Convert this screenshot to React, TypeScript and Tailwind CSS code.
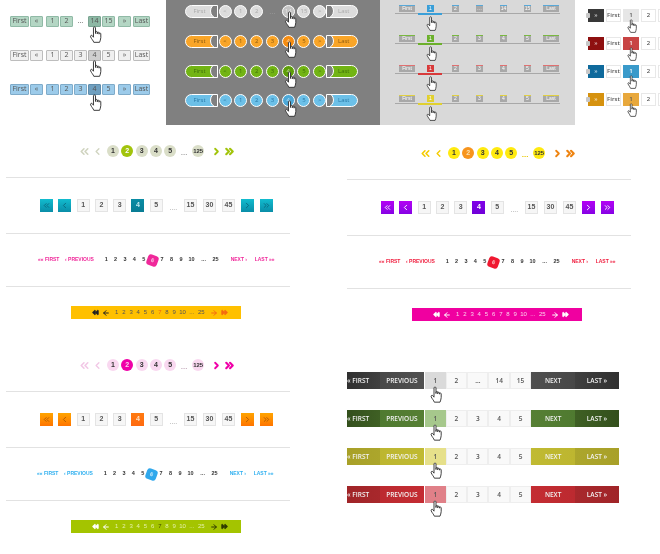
import { ArrowLeft, ArrowRight, ChevronLeft, ChevronRight, ChevronsLeft, ChevronsRight, FastForward, Rewind } from "lucide-react"

function Hand({ className }: { className: string }) {
  return (
    <svg viewBox="0 0 18 25" className={"absolute z-10 " + className} fill="#fff" stroke="#333" strokeWidth="1.4" strokeLinejoin="round">
      <path d="M6 2.5C6 1 9 1 9 2.5V11V9C9 7.6 11.6 7.6 11.6 9V11.5V10C11.6 8.8 14.2 8.8 14.2 10V12V11.2C14.2 10 16.8 10 16.8 11.4V17C16.8 20 15.5 22 15 24H6.5C5.8 21.5 3 19 1.8 16C1.2 14 3 13 4.2 14.2L6 16.5Z" />
    </svg>
  )
}

const flatRows = [
  { btn: "bg-[#b4d6c4] border-[#90baa6]", on: "bg-[#8db8a4] border-[#7aa592]", labels: ["1", "2", "…", "14", "15"], at: 3 },
  { btn: "bg-[#f0f0f0] border-[#bdbdbd]", on: "bg-[#cfcfcf] border-[#b0b0b0]", labels: ["1", "2", "3", "4", "5"], at: 3 },
  { btn: "bg-[#9ccbea] border-[#7fabc9]", on: "bg-[#6f9fbf] border-[#5f8dac]", labels: ["1", "2", "3", "4", "5"], at: 3 },
]

function FlatPanel() {
  return (
    <div className="w-[166px] pl-[10px] pt-4 flex flex-col gap-[23px] font-['Open_Sans',sans-serif] text-[7px] text-[#555]">
      {flatRows.map((r, i) => (
        <div key={i} className="flex h-[11px]">
          <span className={"w-[19px] border rounded-[1px] flex items-center justify-center " + r.btn}>First</span>
          <span className={"w-[13px] ml-px border rounded-[1px] flex items-center justify-center " + r.btn}>«</span>
          <div className="flex gap-px ml-[3px]">
            {r.labels.map((l, j) =>
              l === "…" ? (
                <span key={j} className="w-[13px] flex items-center justify-center">…</span>
              ) : (
                <span key={j} className={"relative w-[13px] border rounded-[1px] flex items-center justify-center " + (j === r.at ? r.on : r.btn)}>
                  {l}
                  {j === r.at && <Hand className="w-[13px] h-[17px] top-[9px] left-0" />}
                </span>
              )
            )}
          </div>
          <span className={"w-[13px] ml-[3px] border rounded-[1px] flex items-center justify-center " + r.btn}>»</span>
          <span className={"w-[17px] ml-[2px] border rounded-[1px] flex items-center justify-center " + r.btn}>Last</span>
        </div>
      ))}
    </div>
  )
}

const pillRows = [
  { c: "bg-[#dcdcdc] text-[#aaa]", on: "bg-[#c4c4c4]", labels: ["1", "2", "", "14", "15"] },
  { c: "bg-[#f9a528] text-[#8a5a10]", on: "bg-[#f58c10]", labels: ["1", "2", "3", "4", "5"] },
  { c: "bg-[#72b414] text-[#3f700a]", on: "bg-[#5e9e08]", labels: ["1", "2", "3", "4", "5"] },
  { c: "bg-[#6cc0e8] text-[#2a7aa8]", on: "bg-[#4ca8d8]", labels: ["1", "2", "3", "4", "5"] },
]

function PillPanel() {
  return (
    <div className="w-[214px] h-[125px] bg-[#808080] pl-[19px] pt-[5px] flex flex-col gap-[16.8px] font-['Open_Sans',sans-serif] text-[6px]">
      {pillRows.map((r, i) => (
        <div key={i} className="flex items-center h-[13px]">
          <span className={"relative overflow-hidden w-[33px] h-[13px] pr-[4px] rounded-l-full border-[1.5px] border-white flex items-center justify-center " + r.c}>
            First
            <span className="absolute -right-[9px] top-[-3px] w-[16px] h-[16px] rounded-full bg-[#808080] border-[1.5px] border-white" />
          </span>
          <div className="flex gap-[2.8px] ml-[0.5px]">
            {["<", ...r.labels, ">"].map((l, j) =>
              l === "" ? (
                <span key={j} className="w-[13px] text-center text-[#999] text-[8px]">…</span>
              ) : (
                <span key={j} className={"relative w-[13px] h-[13px] rounded-full border-[1.5px] border-white flex items-center justify-center " + (j === 4 ? r.on + " text-white/60" : r.c)}>
                  {l}
                  {j === 4 && <Hand className="w-[13px] h-[17px] top-[5px] left-[1px]" />}
                </span>
              )
            )}
          </div>
          <span className={"relative overflow-hidden w-[32px] h-[13px] -ml-[0.5px] pl-[4px] rounded-r-full border-[1.5px] border-white flex items-center justify-center " + r.c}>
            Last
            <span className="absolute -left-[9px] top-[-3px] w-[16px] h-[16px] rounded-full bg-[#808080] border-[1.5px] border-white" />
          </span>
        </div>
      ))}
    </div>
  )
}

const tabRows = [
  { top: "border-[#58a8d8]", on: "bg-[#3a9fd8]", line: "bg-[#3a9fd8]", mid: ["2", "…", "14", "15"] },
  { top: "border-[#7ab840]", on: "bg-[#6cb02c]", line: "bg-[#6cb02c]", mid: ["2", "3", "4", "5"] },
  { top: "border-[#e07070]", on: "bg-[#d83a3a]", line: "bg-[#d83a3a]", mid: ["2", "3", "4", "5"] },
  { top: "border-[#e0d040]", on: "bg-[#e0d030]", line: "bg-[#e0d030]", mid: ["2", "3", "4", "5"] },
]

function TabPanel() {
  return (
    <div className="w-[195px] h-[125px] bg-[#d9d9d9] pl-[15px] pt-[5px] flex flex-col gap-[21px] font-['Liberation_Sans',sans-serif] text-[5px] text-white">
      {tabRows.map((r, i) => (
        <div key={i} className="w-[165px] h-[9px] pl-[4px] flex gap-[11px] border-b border-[#a8a8a8] relative">
          <span className={"w-[16px] h-[7px] bg-[#a8a8a8] border-t flex items-center justify-center " + r.top}>First</span>
          <span className={"relative w-[7px] h-[7px] ml-px mr-[1px] flex items-center justify-center " + r.on}>
            1
            <span className={"absolute top-[8px] -left-[9px] w-[24px] h-[2px] " + r.line} />
            <Hand className="w-[11px] h-[15px] top-[11px] -left-[1px]" />
          </span>
          {r.mid.map((m, j) => (
            <span key={j} className={"w-[7px] h-[7px] ml-[6px] bg-[#a8a8a8] border-t flex items-center justify-center " + r.top}>{m}</span>
          ))}
          <span className={"w-[16px] h-[7px] ml-px bg-[#a8a8a8] border-t flex items-center justify-center " + r.top}>Last</span>
        </div>
      ))}
    </div>
  )
}

const tagRows = [
  { dark: "bg-[#383838]", on: "bg-[#e6e6e6]", onText: "text-[#555]" },
  { dark: "bg-[#8e1010]", on: "bg-[#c84444]", onText: "text-[#fff]" },
  { dark: "bg-[#0f6a9c]", on: "bg-[#3a9aca]", onText: "text-[#fff]" },
  { dark: "bg-[#d6920f]", on: "bg-[#e8a83c]", onText: "text-[#555]" },
]

function TagPanel() {
  return (
    <div className="w-[85px] h-[125px] overflow-hidden pl-[13px] pt-[9px] flex flex-col gap-[15px] font-['Open_Sans',sans-serif] text-[6px] text-[#555] font-semibold">
      {tagRows.map((r, i) => (
        <div key={i} className="flex items-center gap-[2px] h-[13px] w-[90px]">
          <span className={"relative w-[16px] h-[13px] flex items-center justify-center text-white/70 " + r.dark}>
            »
            <span className="absolute -left-[2px] top-[4px] w-[4px] h-[5px] rounded-[1px] bg-[#c8c8c8]" />
          </span>
          <span className="w-[15px] h-[13px] bg-white border border-[#e8e8e8] flex items-center justify-center">First</span>
          <span className={"relative w-[16px] h-[13px] flex items-center justify-center " + r.on + " " + r.onText}>
            1
            <Hand className="w-[10px] h-[14px] top-[10px] left-[4px]" />
          </span>
          <span className="w-[15px] h-[13px] bg-white border border-[#e8e8e8] flex items-center justify-center">2</span>
          <span className="w-[15px] h-[13px] bg-white border border-[#e8e8e8]" />
        </div>
      ))}
    </div>
  )
}

type Theme = {
  dim: string
  ball: string
  ballOn: string
  dots: string
  next: string
  square: string
  squareOn: string
  link: string
  blob: string
  blobText: string
  bar: string
  barText: string
  barOn: string
  barLead: string
  barTail: string
  shift: string
}

const themes: Record<string, Theme> = {
  lime: {
    dim: "text-[#d0d4c0]", ball: "bg-[#dadec8]", ballOn: "bg-[#a2c40c] text-white", dots: "text-[#aaa]", next: "text-[#a2c40c]",
    square: "bg-linear-to-b from-[#12bccf] to-[#0a8ea8] text-[#0a6a80]", squareOn: "bg-linear-to-b from-[#0a8ca4] to-[#087c94] text-[#bfe8f0]",
    link: "text-[#f0289a]", blob: "bg-[#f0289a]", blobText: "text-[#fbc8e4]",
    bar: "bg-[#ffc000]", barText: "text-[#555]", barOn: "text-[#f06010]", barLead: "text-[#222]", barTail: "text-[#f56a10]", shift: "pl-[32px]",
  },
  sun: {
    dim: "text-[#f5cc00]", ball: "bg-[#ffea10]", ballOn: "bg-[#f7941d] text-[#fbe0b0]", dots: "text-[#e8c800]", next: "text-[#ee8412]",
    square: "bg-linear-to-b from-[#b400f4] to-[#8600e4] text-white", squareOn: "bg-linear-to-b from-[#8000e8] to-[#7000d8] text-white",
    link: "text-[#f02040]", blob: "bg-[#f01830]", blobText: "text-[#fbc8c8]",
    bar: "bg-[#f000a0]", barText: "text-[#fbd0ec]", barOn: "text-[#fbd0ec]", barLead: "text-white", barTail: "text-white", shift: "pl-[32px]",
  },
  pink: {
    dim: "text-[#f2c8e6]", ball: "bg-[#f9d8f0]", ballOn: "bg-[#f000a8] text-[#fbd0ec]", dots: "text-[#c8b0c0]", next: "text-[#f000a8]",
    square: "bg-linear-to-b from-[#ffa400] to-[#ff7400] text-[#b05a00]", squareOn: "bg-linear-to-b from-[#ff7a10] to-[#ff6a10] text-[#ffe0c0]",
    link: "text-[#30b0f0]", blob: "bg-[#30a8ec]", blobText: "text-[#d0ecfb]",
    bar: "bg-[#a4c400]", barText: "text-[#e4f0a8]", barOn: "text-[#455000]", barLead: "text-white", barTail: "text-[#2f3a00]", shift: "pl-[31px]",
  },
}

function Block({ t }: { t: Theme }) {
  return (
    <div className="w-[284px] ml-[6px] font-['Liberation_Sans',sans-serif] font-bold">
      <div className="h-[52px] pl-[72px] flex items-center">
        <ChevronsLeft className={"w-[13px] h-[13px] " + t.dim} strokeWidth={3} />
        <ChevronLeft className={"w-[11px] h-[11px] ml-px " + t.dim} strokeWidth={3} />
        <div className="flex gap-[2.3px] ml-[4px] text-[7px] text-[#333]">
          {["1", "2", "3", "4", "5"].map((n) => (
            <span key={n} className={"w-[12px] h-[12px] rounded-full flex items-center justify-center " + (n === "2" ? t.ballOn : t.ball)}>{n}</span>
          ))}
        </div>
        <span className={"w-[16px] pt-[4px] text-center text-[8px] " + t.dots}>...</span>
        <span className={"w-[12px] h-[12px] rounded-full text-[6px] text-[#333] flex items-center justify-center " + t.ball}>125</span>
        <ChevronRight className={"w-[11px] h-[11px] ml-[7px] " + t.next} strokeWidth={4} />
        <ChevronsRight className={"w-[13px] h-[13px] ml-[1px] " + t.next} strokeWidth={4} />
      </div>
      <div className="h-[56px] border-t border-[#e2e2e2] pl-[34px] flex items-center gap-[5.3px] text-[7px] text-[#555]">
        <span className={"w-[13px] h-[13px] flex items-center justify-center " + t.square}><ChevronsLeft className="w-[9px] h-[9px]" strokeWidth={2.5} /></span>
        <span className={"w-[13px] h-[13px] flex items-center justify-center " + t.square}><ChevronLeft className="w-[9px] h-[9px]" strokeWidth={2.5} /></span>
        {["1", "2", "3", "4", "5"].map((n) => (
          <span key={n} className={"w-[13px] h-[13px] flex items-center justify-center " + (n === "4" ? t.squareOn : "bg-[#f6f6f6] border border-[#e4e4e4]")}>{n}</span>
        ))}
        <span className="w-[10.6px] pt-[6px] text-center text-[#999] font-normal">....</span>
        <div className="flex gap-[6px]">
          {["15", "30", "45"].map((n) => (
            <span key={n} className="w-[13px] h-[13px] bg-[#f6f6f6] border border-[#e4e4e4] flex items-center justify-center">{n}</span>
          ))}
          <span className={"w-[13px] h-[13px] flex items-center justify-center " + t.square}><ChevronRight className="w-[9px] h-[9px]" strokeWidth={2.5} /></span>
          <span className={"w-[13px] h-[13px] flex items-center justify-center " + t.square}><ChevronsRight className="w-[9px] h-[9px]" strokeWidth={2.5} /></span>
        </div>
      </div>
      <div className={"h-[54px] border-y border-[#e2e2e2] flex items-center text-[5px] " + t.shift}>
        <span className={"w-[19px] whitespace-nowrap " + t.link}>«« FIRST</span>
        <span className={"w-[26px] ml-[8px] whitespace-nowrap " + t.link}>‹ PREVIOUS</span>
        <div className="flex ml-[10.5px] text-[#333] text-[5.5px]">
          {["1", "2", "3", "4", "5", "6", "7", "8", "9", "10", "...", "25"].map((n) =>
            n === "6" ? (
              <span key={n} className={"w-[11px] h-[11px] -mx-px rotate-[20deg] rounded-[3px] flex items-center justify-center " + t.blob + " " + t.blobText}>6</span>
            ) : (
              <span key={n} className={n === "10" || n === "..." || n === "25" ? "w-[12px] text-center" : "w-[9.4px] text-center"}>{n}</span>
            )
          )}
        </div>
        <span className={"w-[16px] ml-[9px] whitespace-nowrap " + t.link}>NEXT ›</span>
        <span className={"ml-[8px] whitespace-nowrap " + t.link}>LAST »»</span>
      </div>
      <div className={"w-[170px] h-[13px] mt-[19px] ml-[65px] pl-[21px] flex items-center gap-[1.4px] text-[6px] font-normal " + t.bar + " " + t.barText}>
        <Rewind className={"w-[7px] h-[7px] fill-current " + t.barLead} />
        <ArrowLeft className={"w-[8px] h-[8px] mx-[2px] " + t.barLead} strokeWidth={3} />
        {["1", "2", "3", "4", "5", "6", "7", "8", "9", "10", "...", "25"].map((n) => (
          <span key={n} className={(n === "7" ? t.barOn : "") + (n === "10" || n === "..." || n === "25" ? " w-[8px] text-center" : " w-[5.8px] text-center")}>{n}</span>
        ))}
        <ArrowRight className={"w-[8px] h-[8px] ml-[3px] " + t.barTail} strokeWidth={3} />
        <FastForward className={"w-[7px] h-[7px] ml-[2px] fill-current " + t.barTail} />
      </div>
    </div>
  )
}

const wideRows = [
  { a: "from-[#303030] to-[#404040]", b: "from-[#484848] to-[#505050]", on: "bg-[#dadada]", c: "from-[#505050] to-[#484848]", d: "from-[#404040] to-[#303030]", cells: ["2", "...", "14", "15"] },
  { a: "from-[#334f1c] to-[#3f6024]", b: "from-[#4f7a30] to-[#567f34]", on: "bg-[#a6c88c]", c: "from-[#567f34] to-[#4f7a30]", d: "from-[#3f6024] to-[#334f1c]", cells: ["2", "3", "4", "5"] },
  { a: "from-[#a8a028] to-[#aca62c]", b: "from-[#bdb630] to-[#c0ba32]", on: "bg-[#e6e08a]", c: "from-[#c0ba32] to-[#bdb630]", d: "from-[#aca62c] to-[#a8a028]", cells: ["2", "3", "4", "5"] },
  { a: "from-[#a02428] to-[#a8282c]", b: "from-[#bc2a30] to-[#c42c32]", on: "bg-[#e08088]", c: "from-[#c42c32] to-[#bc2a30]", d: "from-[#a8282c] to-[#a02428]", cells: ["2", "3", "4", "5"] },
]

function WideBars() {
  return (
    <div className="mt-[51px] ml-[6px] flex flex-col gap-[21px] font-['Open_Sans',sans-serif] font-semibold text-[6.5px] text-[#f2f2f2]">
      {wideRows.map((r, i) => (
        <div key={i} className="flex h-[17px] w-[272px]">
          <span className={"w-[33px] bg-linear-to-r flex items-center whitespace-nowrap overflow-hidden " + r.a}>« FIRST</span>
          <span className={"w-[44px] bg-linear-to-r flex items-center justify-center " + r.b}>PREVIOUS</span>
          <span className={"relative w-[21px] ml-px flex items-center justify-center text-[#555] " + r.on}>
            1
            <Hand className="w-[12px] h-[17px] top-[14px] left-[5px]" />
          </span>
          {r.cells.map((c) => (
            <span key={c} className="w-[21.4px] bg-[#f9f9f9] border border-[#eee] flex items-center justify-center text-[#555]">{c}</span>
          ))}
          <span className={"w-[44px] bg-linear-to-r flex items-center justify-center " + r.c}>NEXT</span>
          <span className={"w-[44px] bg-linear-to-r flex items-center justify-center " + r.d}>LAST »</span>
        </div>
      ))}
    </div>
  )
}

export default function App() {
  return (
    <div className="w-[660px] h-[554px] overflow-hidden bg-white blur-[0.35px]">
      <div className="flex h-[125px]">
        <FlatPanel />
        <PillPanel />
        <TabPanel />
        <TagPanel />
      </div>
      <div className="flex">
        <div className="w-[341px] flex flex-col gap-[20px]">
          <Block t={themes.lime} />
          <Block t={themes.pink} />
        </div>
        <div className="w-[319px] pt-[2px]">
          <Block t={themes.sun} />
          <WideBars />
        </div>
      </div>
    </div>
  )
}
